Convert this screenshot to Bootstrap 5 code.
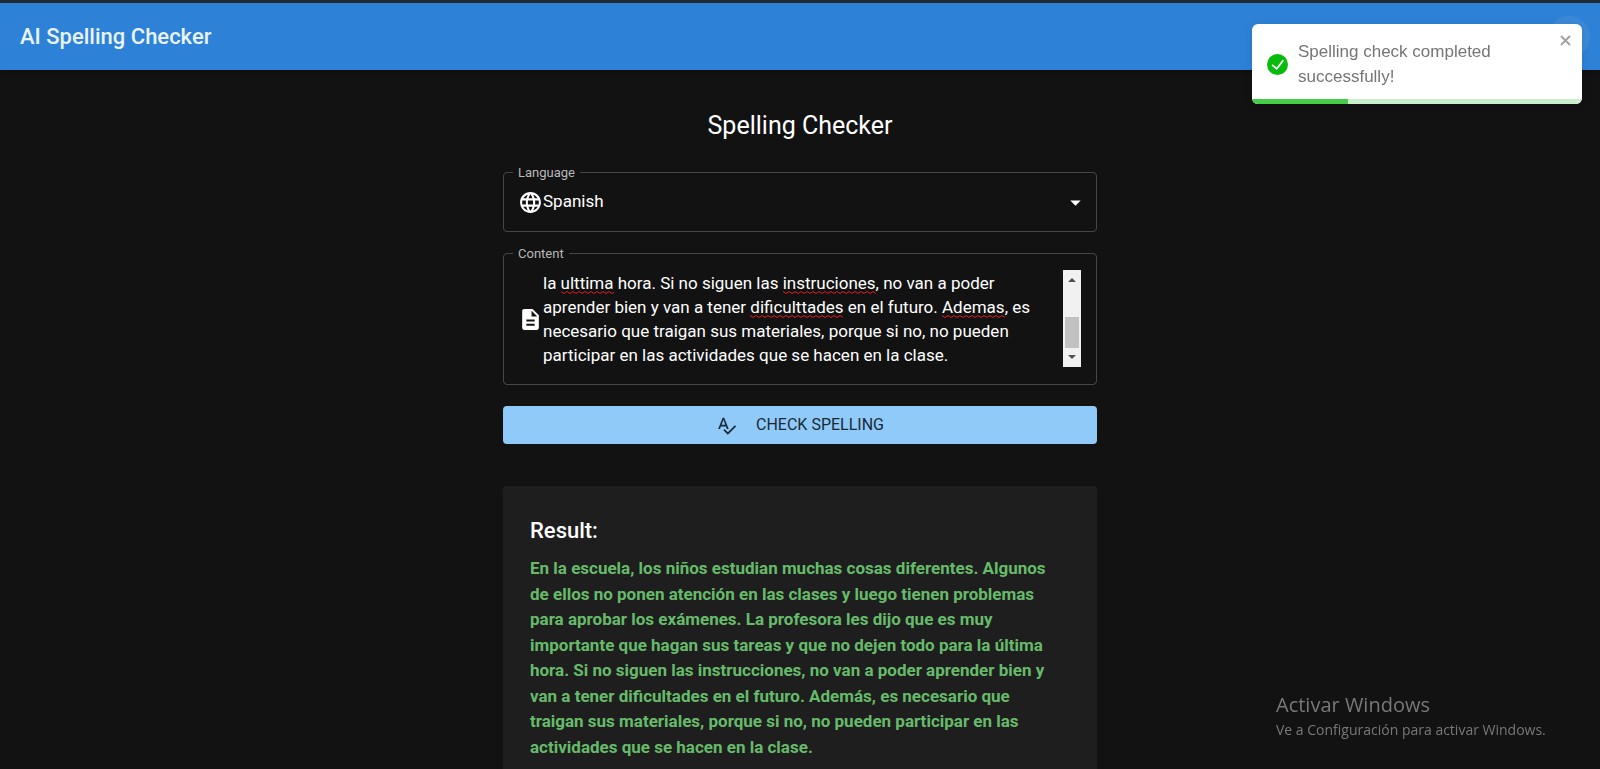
<!DOCTYPE html>
<html lang="en">
<head>
<meta charset="utf-8">
<meta name="viewport" content="width=device-width, initial-scale=1">
<title>AI Spelling Checker</title>
<link href="https://cdn.jsdelivr.net/npm/bootstrap@5.3.0/dist/css/bootstrap.min.css" rel="stylesheet">
<style>
  body { background: #121212; color: #fff; font-family: Roboto, sans-serif; font-size: 17px; line-height: 1.5; }
  .app-bar { background: #2d81d6; border-top: 3px solid #222b34; min-height: 70px; box-shadow: 0 2px 4px rgba(0,0,0,.3); }
  .app-bar .navbar-brand { color: #e8f3fd; font-size: 22px; font-weight: 500; line-height: 32px; }
  .avatar-btn { width: 42px; height: 42px; background: rgba(255,255,255,.07); margin-right: 10px; }
  .paper { max-width: 638px; margin-top: 27px; padding: 11px 22px 22px; box-shadow: 0 2px 3px rgba(0,0,0,.25); }
  .paper-title { font-size: 25px; font-weight: 400; line-height: 36px; margin-bottom: 28px; }
  .field { border: 1px solid #474747; border-radius: 4px; padding: 16px 15px 16px 14px; margin-bottom: 21px; }
  .field-label { position: absolute; top: -10px; left: 9px; padding: 0 5px; background: #121212; color: #b8b8b8; font-size: 13px; line-height: 20px; }
  .field-icon { width: 25px; height: 25px; fill: #fff; flex: none; }
  .field select, .field textarea { background: transparent; color: #fff; border: 0; outline: 0; padding: 0; }
  .field select { appearance: none; height: 26px; }
  .field select option { color: #000; }
  .caret { width: 25px; height: 25px; right: 8px; pointer-events: none; fill: #fff; }
  .editor { height: 98px; }
  .editor textarea, .editor .mirror { font-size: 17px; line-height: 24px; display: block; width: 100%; height: 98px; padding: 1px 0 0; resize: none; overflow: hidden; }
  .editor .mirror { position: absolute; inset: 0; visibility: hidden; white-space: pre-wrap; }
  .squiggle { position: absolute; height: 3px; pointer-events: none; background: url("data:image/svg+xml,%3Csvg xmlns='http://www.w3.org/2000/svg' width='6' height='3'%3E%3Cpath d='M0 .5 3 2.500 6 .5' fill='none' stroke='%23e01b1b' stroke-width='1'/%3E%3C/svg%3E") repeat-x; }
  .scroll-rail { width: 18px; height: 97px; margin-left: 15px; background: #f1f1f1; padding: 8px 2px; }
  .scroll-rail svg { width: 8px; height: 4px; fill: #505050; }
  .scroll-thumb { height: 31px; background: #c1c1c1; margin-bottom: 7px; }
  .btn-check-spelling { --bs-btn-bg: #90caf9; --bs-btn-color: #1b2935; --bs-btn-hover-bg: #42a5f5; --bs-btn-border-radius: 4px; --bs-btn-border-width: 0; height: 38px; font-size: 16px; font-weight: 400; gap: 19px; }
  .btn-check-spelling svg { width: 21px; height: 21px; fill: currentColor; }
  .result { background: #1e1e1e; border-radius: 4px; margin-top: 42px; padding: 27px; }
  .result h2 { font-size: 22px; font-weight: 500; line-height: 36px; margin-bottom: 7px; }
  .result p { color: #66bb6a; font-weight: 700; }
  .notice { position: fixed; top: 24px; right: 18px; width: 330px; height: 80px; background: #fff; color: #757575; border-radius: 6px; overflow: hidden; font-family: "Liberation Sans", sans-serif; z-index: 1080; box-shadow: 0 1px 10px rgba(0,0,0,.1); }
  .notice-body { padding: 15px 15px 0; gap: 10px; line-height: 25px; }
  .notice-close { position: absolute; top: 10px; right: 10px; width: 13px; height: 13px; fill: none; stroke: #a3a3a3; }
  .notice .progress { position: absolute; inset: auto 0 0; height: 5px; border-radius: 0; background: #c9f0ca; }
  .notice .progress-bar { background: #45cd49; }
  .os-notice { position: fixed; right: 46px; bottom: 27px; width: 278px; color: #787878; font-family: "Open Sans", sans-serif; font-size: 14px; line-height: 24px; }
  .os-notice strong { font-size: 20px; font-weight: 400; line-height: 26px; }
</style>
</head>
<body>
<nav class="navbar app-bar py-0">
  <div class="container-fluid px-0">
    <a class="navbar-brand ms-3 ps-1 py-0" href="#">AI Spelling Checker</a>
    <button type="button" class="btn avatar-btn rounded-circle border-0 p-0" aria-label="Toggle theme"></button>
  </div>
</nav>

<main class="paper mx-auto">
  <h1 class="paper-title text-center">Spelling Checker</h1>
  <form>
    <div class="field position-relative d-flex align-items-center">
      <label class="field-label" for="language">Language</label>
      <svg class="field-icon" viewBox="0 0 24 24" aria-hidden="true"><path d="M11.99 2C6.47 2 2 6.48 2 12s4.47 10 9.99 10C17.52 22 22 17.52 22 12S17.52 2 11.99 2zm6.93 6h-2.95c-.32-1.25-.78-2.45-1.38-3.56 1.84.63 3.37 1.91 4.33 3.56zM12 4.04c.83 1.2 1.48 2.53 1.91 3.96h-3.82c.43-1.43 1.08-2.76 1.91-3.96zM4.26 14C4.1 13.36 4 12.69 4 12s.1-1.36.26-2h3.38c-.08.66-.14 1.32-.14 2s.06 1.34.14 2H4.26zm.82 2h2.95c.32 1.25.78 2.45 1.38 3.56-1.84-.63-3.37-1.9-4.33-3.56zm2.95-8H5.08c.96-1.66 2.49-2.93 4.33-3.56C8.81 5.55 8.35 6.75 8.03 8zM12 19.96c-.83-1.2-1.48-2.53-1.91-3.96h3.82c-.43 1.43-1.08 2.76-1.91 3.96zM14.34 14H9.66c-.09-.66-.16-1.32-.16-2s.07-1.35.16-2h4.68c.09.65.16 1.32.16 2s-.07 1.34-.16 2zm.25 5.56c.6-1.11 1.06-2.31 1.38-3.56h2.95c-.96 1.65-2.49 2.93-4.33 3.56zM16.36 14c.08-.66.14-1.32.14-2s-.06-1.34-.14-2h3.38c.16.64.26 1.31.26 2s-.1 1.36-.26 2h-3.38z"/></svg>
      <select id="language" class="flex-grow-1">
        <option>English</option>
        <option selected>Spanish</option>
        <option>French</option>
      </select>
      <svg class="caret position-absolute" viewBox="0 0 24 24" aria-hidden="true"><path d="m7 10 5 5 5-5z"/></svg>
    </div>

    <div class="field position-relative d-flex align-items-center">
      <label class="field-label" for="content">Content</label>
      <svg class="field-icon" viewBox="0 0 24 24" aria-hidden="true"><path d="M14 2H6c-1.100 0-1.990.9-1.990 2L4 20c0 1.100.89 2 1.990 2H18c1.100 0 2-.9 2-2V8l-6-6zm2 16H8v-2h8v2zm0-4H8v-2h8v2zm-3-5V3.500L18.500 9H13z"/></svg>
      <div class="editor position-relative flex-grow-1">
        <textarea id="content" spellcheck="false">la ulttima hora. Si no siguen las instruciones, no van a poder aprender bien y van a tener dificulttades en el futuro. Ademas, es necesario que traigan sus materiales, porque si no, no pueden participar en las actividades que se hacen en la clase.</textarea>
      </div>
      <div class="scroll-rail d-flex flex-column flex-shrink-0 align-self-start" aria-hidden="true">
        <svg class="mx-auto mb-auto flex-shrink-0" viewBox="0 0 8 4"><path d="M0 4 4 0l4 4z"/></svg>
        <div class="scroll-thumb flex-shrink-0"></div>
        <svg class="mx-auto flex-shrink-0" viewBox="0 0 8 4"><path d="M0 0h8L4 4z"/></svg>
      </div>
    </div>

    <button type="button" class="btn btn-check-spelling w-100 d-flex align-items-center justify-content-center text-uppercase py-0">
      <svg viewBox="0 0 24 24" aria-hidden="true"><path d="M12.450 16h2.090L9.430 3H7.570L2.460 16h2.090l1.120-3h5.640l1.140 3zm-6.020-5L8.500 5.480 10.570 11H6.430zm15.160.59-8.090 8.090L9.830 16l-1.410 1.410 5.090 5.090L23 13l-1.410-1.410z"/></svg>
      Check Spelling
    </button>
  </form>

  <section class="result">
    <h2>Result:</h2>
    <p class="mb-0">En la escuela, los niños estudian muchas cosas diferentes. Algunos<br>
      de ellos no ponen atención en las clases y luego tienen problemas<br>
      para aprobar los exámenes. La profesora les dijo que es muy<br>
      importante que hagan sus tareas y que no dejen todo para la última<br>
      hora. Si no siguen las instrucciones, no van a poder aprender bien y<br>
      van a tener dificultades en el futuro. Además, es necesario que<br>
      traigan sus materiales, porque si no, no pueden participar en las<br>
      actividades que se hacen en la clase.</p>
  </section>
</main>

<div class="notice" role="alert">
  <div class="notice-body d-flex align-items-center">
    <svg width="21" height="21" viewBox="0 0 24 24" class="flex-shrink-0" aria-hidden="true"><path fill="#07bc0c" d="M12 0a12 12 0 1012 12A12.014 12.014 0 0012 0zm6.927 8.200l-6.845 9.289a1.011 1.011 0 01-1.430.188l-4.888-3.908a1 1 0 111.250-1.562l4.076 3.261 6.227-8.451a1 1 0 111.610 1.183z"/></svg>
    <div>Spelling check completed successfully!</div>
  </div>
  <button type="button" class="btn p-0 border-0" aria-label="Close"><svg class="notice-close" viewBox="0 0 13 13"><path d="m2 2 9 9m0-9-9 9" stroke-width="2"/></svg></button>
  <div class="progress" role="progressbar" aria-label="Time left" aria-valuenow="29" aria-valuemin="0" aria-valuemax="100"><div class="progress-bar" style="width:29%"></div></div>
</div>

<aside class="os-notice">
  <strong class="d-block">Activar Windows</strong>
  Ve a Configuración para activar Windows.
</aside>

<script src="https://cdn.jsdelivr.net/npm/bootstrap@5.3.0/dist/js/bootstrap.bundle.min.js"></script>
<script>
  // Measure each unknown word in a hidden copy of the text, then underline it in the editor.
  const box = document.getElementById('content');
  const editor = box.parentElement;
  const unknown = /(ulttima|instruciones|dificulttades|Ademas)/g;
  function underline() {
    editor.querySelectorAll('.squiggle').forEach(s => s.remove());
    const mirror = document.createElement('div');
    mirror.className = 'mirror';
    mirror.innerHTML = box.value.replace(/</g, '&lt;').replace(unknown, '<span>$1</span>');
    editor.append(mirror);
    const origin = editor.getBoundingClientRect();
    const rects = [...mirror.querySelectorAll('span')].map(s => s.getBoundingClientRect());
    mirror.remove();
    for (const r of rects) {
      const line = document.createElement('i');
      line.className = 'squiggle';
      line.style.left = Math.round(r.left - origin.left) + 'px';
      line.style.top = Math.round(r.bottom - origin.top - 2) + 'px';
      line.style.width = Math.round(r.width) + 'px';
      editor.append(line);
    }
  }
  box.addEventListener('input', underline);
  window.addEventListener('resize', underline);
  underline();
</script>
</body>
</html>
